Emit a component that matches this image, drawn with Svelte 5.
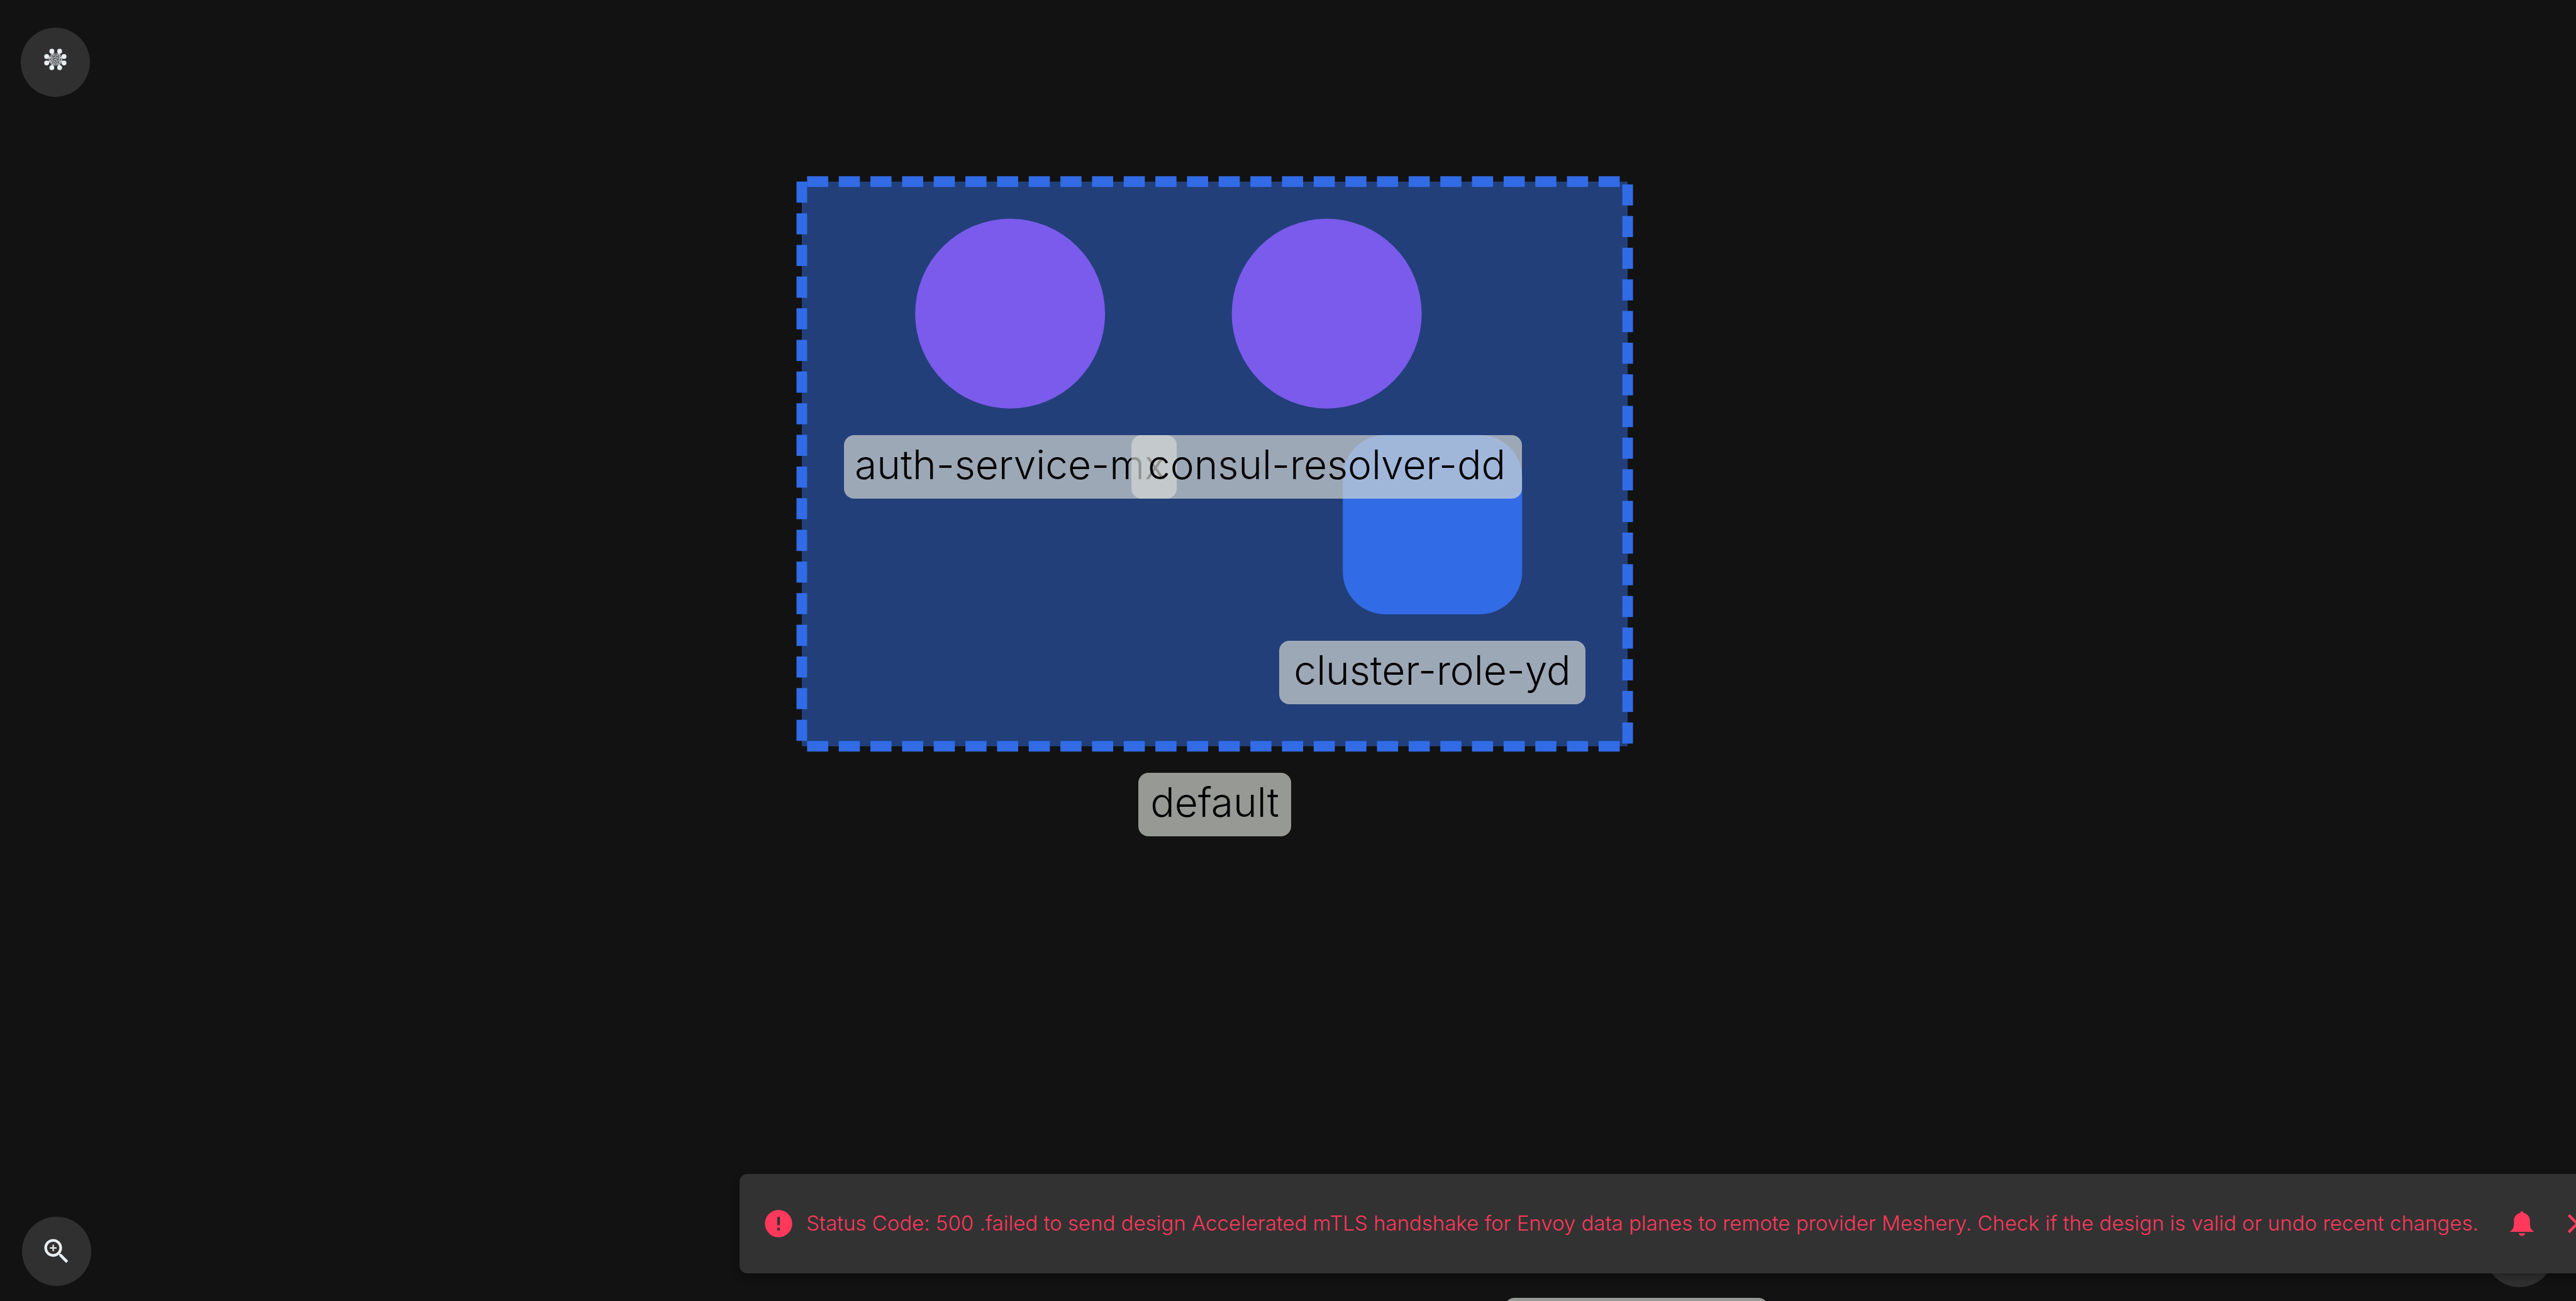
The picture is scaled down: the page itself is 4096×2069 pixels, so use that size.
<script>
  const labels = [
    { text: 'auth-service-mx', x: 1342, y: 692, w: 529 },
    { text: 'consul-resolver-dd', x: 1799, y: 692, w: 621 },
    { text: 'cluster-role-yd', x: 2034, y: 1019, w: 487 },
    { text: 'default', x: 1810, y: 1229, w: 243 },
    { text: '', x: 2392, y: 2064, w: 420 },
  ];

  const hub = [
    [8, 1.6], [16, 1.6], [20.5, 7], [20.5, 13.6],
    [16, 18.4], [8, 18.4], [2.7, 13.6], [2.7, 7],
  ];
  const ring = [
    [8.2, 4], [15.8, 4], [18.5, 8], [18.5, 12.4],
    [15.8, 16], [8.2, 16], [5, 12.4], [5, 8],
  ];
  const links = ring.flatMap((a, i) => ring.slice(i + 1).map((b) => [a, b]));
</script>

<main class="page">
  <section class="canvas" aria-label="Design canvas">
    <svg class="graph" viewBox="1727 382 1816 1250" aria-hidden="true">
      <rect x="1739" y="394" width="1792" height="1225.5" fill="#223f7a" />
      <g stroke="#316ce6" stroke-width="23" stroke-dasharray="45.8 22.9">
        <path d="M1750.5 394H3515" />
        <path d="M3531 400V1614" />
        <path d="M1750.5 1619.5H3515" />
        <path d="M1739 394V1608" />
      </g>
      <circle cx="2191" cy="680.5" r="206" fill="#7a5beb" />
      <circle cx="2878" cy="680.5" r="206" fill="#7a5beb" />
      <rect x="2913" y="944" width="389" height="389" rx="92" fill="#316ce6" />
    </svg>
    {#each labels as l}
      <div class="label" style="left:{l.x}px;top:{l.y}px;width:{l.w}px">{l.text}</div>
    {/each}
  </section>

  <button class="fab menu" aria-label="Menu">
    <svg viewBox="0 0 23.2 20" class="hub">
      <g stroke="#e8eff3" stroke-width=".4">
        {#each links as [a, b]}
          <line x1={a[0]} y1={a[1]} x2={b[0]} y2={b[1]} />
        {/each}
      </g>
      <g fill="#e8eff3">
        {#each hub as [x, y]}
          <circle cx={x} cy={y} r="2.5" />
        {/each}
      </g>
    </svg>
  </button>

  <button class="fab zoom" aria-label="Zoom in">
    <svg class="icon" viewBox="0 0 24 24" fill="currentColor">
      <path d="M15.5 14h-.79l-.28-.27C15.41 12.59 16 11.11 16 9.5 16 5.91 13.09 3 9.5 3S3 5.91 3 9.5 5.91 16 9.5 16c1.61 0 3.09-.59 4.23-1.57l.27.28v.79l5 4.99L20.49 19l-4.99-5zm-6 0C7.01 14 5 11.99 5 9.5S7.01 5 9.5 5 14 7.01 14 9.5 11.99 14 9.5 14z" />
      <path d="M12 10h-2v2H9v-2H7V9h2V7h1v2h2v1z" />
    </svg>
  </button>

  <button class="fab help" aria-label="Help"></button>

  <div class="snackbar" role="alert">
    <svg class="icon" viewBox="0 0 24 24" fill="currentColor" aria-hidden="true">
      <path d="M12 2C6.48 2 2 6.48 2 12s4.48 10 10 10 10-4.48 10-10S17.52 2 12 2zm1 15h-2v-2h2v2zm0-4h-2V7h2v6z" />
    </svg>
    <span class="message">Status Code: 500 .failed to send design Accelerated mTLS handshake for Envoy data planes to remote provider Meshery. Check if the design is valid or undo recent changes.</span>
    <button class="action" aria-label="Notifications">
      <svg class="icon" viewBox="0 0 24 24" fill="currentColor">
        <path d="M3 18C5.2 16.6 6.1 15 6.1 12V10C6.1 6.8 8 4.6 10.8 4.1A1.2 1.2 0 0 1 13.2 4.1C16 4.6 17.9 6.8 17.9 10V12C17.9 15 18.8 16.6 21 18ZM9.7 19H14.3A2.3 2 0 0 1 9.7 19Z" />
      </svg>
    </button>
    <button class="action" aria-label="Close">
      <svg class="icon" viewBox="0 0 24 24" fill="currentColor">
        <path d="M19 6.41 17.59 5 12 10.59 6.41 5 5 6.41 10.59 12 5 17.59 6.41 19 12 13.41 17.59 19 19 17.59 13.41 12z" />
      </svg>
    </button>
  </div>
</main>

<style>
  :global(body) {
    background: #121212;
  }
  .page {
    position: relative;
    min-height: 100vh;
    overflow: hidden;
    background: #121212;
    font-family: Inter, 'Liberation Sans', sans-serif;
    font-weight: 300;
  }
  .canvas {
    position: absolute;
    inset: 0;
  }
  .graph {
    position: absolute;
    left: 1266px;
    top: 280px;
    width: 1331px;
    height: 916px;
  }
  .label {
    position: absolute;
    box-sizing: border-box;
    height: 101px;
    border-radius: 16px;
    background: rgba(215, 218, 212, 0.68);
    color: #000;
    font-size: 64px;
    font-weight: 350;
    line-height: 94px;
    text-align: center;
    white-space: nowrap;
  }
  button {
    padding: 0;
    border: 0;
    background: none;
    color: inherit;
    font: inherit;
    cursor: pointer;
  }
  .icon {
    display: block;
    flex: none;
    width: 52px;
    height: 52px;
  }
  .fab {
    position: absolute;
    display: flex;
    align-items: center;
    justify-content: center;
    width: 110px;
    height: 110px;
    border-radius: 50%;
    background: #303030;
    color: #e8eff3;
  }
  .menu {
    left: 33px;
    top: 44px;
    padding-bottom: 10px;
  }
  .zoom {
    left: 35px;
    bottom: 24px;
  }
  .help {
    right: 35px;
    bottom: 22px;
  }
  .hub {
    display: block;
    width: 36px;
    height: 33px;
    overflow: visible;
  }
  .snackbar {
    position: absolute;
    left: 1176px;
    bottom: 44px;
    display: flex;
    align-items: center;
    box-sizing: border-box;
    width: max-content;
    height: 158px;
    padding: 0 36px;
    border-radius: 12px;
    background: #323232;
    color: #ff385c;
    box-shadow: 0 6px 14px rgba(0, 0, 0, 0.3);
  }
  .message {
    min-width: 2666px;
    margin: 0 36px 0 18px;
    padding-bottom: 2px;
    font-size: 33px;
    line-height: 48px;
    white-space: nowrap;
  }
  .action + .action {
    margin-left: 36px;
  }
</style>
